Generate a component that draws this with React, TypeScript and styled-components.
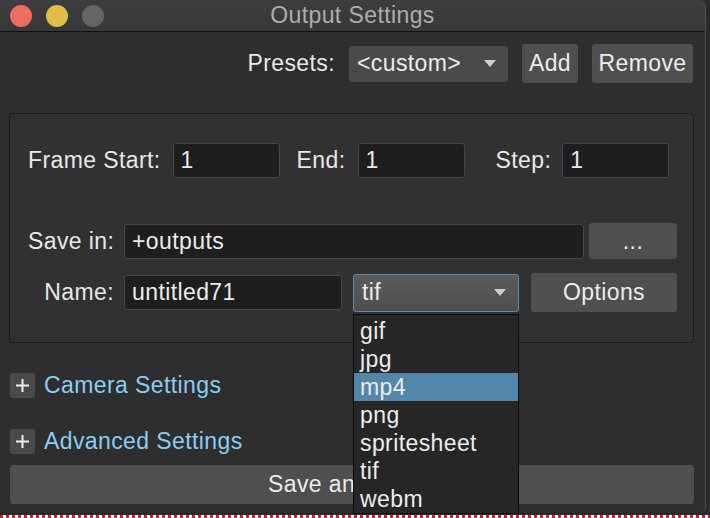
import React from "react";
import styled, { createGlobalStyle } from "styled-components";

const GlobalStyle = createGlobalStyle`
  html, body {
    margin: 0;
    padding: 0;
    background: #ffffff;
  }
  body {
    font-family: "Liberation Sans", Arial, sans-serif;
    color: #e6e6e6;
    letter-spacing: 0.4px;
  }
`;

const Page = styled.div`
  width: 710px;
  height: 518px;
  position: relative;
  overflow: hidden;
  background: #2a2a2a;
`;

const Window = styled.div`
  width: 706px;
  height: 513px;
  background: #2e2e2e;
  border-right: 1px solid #4e4e4e;
  border-radius: 0 6px 6px 0;
  display: flex;
  flex-direction: column;
  box-sizing: border-box;
`;

const TitleBar = styled.div`
  height: 32px;
  flex: none;
  display: flex;
  align-items: center;
  position: relative;
  background: linear-gradient(#3e3e3e, #373737);
  border-bottom: 1px solid #111;
  border-radius: 0 6px 0 0;
  box-sizing: border-box;
`;

const Lights = styled.div`
  display: flex;
  gap: 14px;
  padding-left: 10px;
`;

const Light = styled.span<{ color: string }>`
  width: 22px;
  height: 22px;
  border-radius: 50%;
  background: ${(p) => p.color};
`;

const Title = styled.div`
  position: absolute;
  left: 0;
  right: 0;
  text-align: center;
  font-size: 23px;
  color: #adadad;
  pointer-events: none;
`;

const PresetRow = styled.div`
  display: flex;
  justify-content: flex-end;
  align-items: center;
  gap: 14px;
  margin: 12px 12px 0 0;
  height: 39px;
`;

const Label = styled.span`
  font-size: 23px;
  color: #e8e8e8;
  white-space: nowrap;
`;

const Button = styled.button<{ w?: number; h?: number }>`
  font-family: inherit;
  font-size: 23px;
  letter-spacing: 0.4px;
  color: #ececec;
  background: #4f4f4f;
  border: none;
  border-radius: 3px;
  padding: 0;
  width: ${(p) => (p.w ? `${p.w}px` : "auto")};
  height: ${(p) => p.h || 39}px;
  display: flex;
  align-items: center;
  justify-content: center;
  box-sizing: border-box;
`;

const SelectBox = styled.div<{ w: number; focused?: boolean }>`
  width: ${(p) => p.w}px;
  height: ${(p) => (p.focused ? 38 : 36)}px;
  box-sizing: border-box;
  display: flex;
  align-items: center;
  justify-content: space-between;
  padding: 0 12px 0 8px;
  font-size: 23px;
  color: #ececec;
  border-radius: 3px;
  background: ${(p) =>
    p.focused ? "linear-gradient(#5c5c5c, #4e4e4e)" : "#4a4a4a"};
  border: ${(p) => (p.focused ? "1px solid #5a8fb5" : "none")};
`;

const Arrow = styled.span`
  width: 0;
  height: 0;
  border-left: 6px solid transparent;
  border-right: 6px solid transparent;
  border-top: 7px solid #cfcfcf;
`;

const Group = styled.div`
  margin: 30px 11px 0 9px;
  height: 230px;
  box-sizing: border-box;
  border: 1px solid #191919;
  border-radius: 4px;
  background: #313131;
  padding: 29px 0 0 18px;
  display: flex;
  flex-direction: column;
`;

const FrameRow = styled.div`
  display: flex;
  align-items: center;
  height: 35px;
`;

const Input = styled.div<{ w: number; gap?: number }>`
  width: ${(p) => p.w}px;
  height: 35px;
  flex: none;
  margin-left: ${(p) => p.gap || 0}px;
  box-sizing: border-box;
  background: #1e1e1e;
  border: 1px solid #474747;
  border-radius: 3px;
  padding-left: 7px;
  display: flex;
  align-items: center;
  font-size: 23px;
  color: #ececec;
`;

const RowLabel = styled(Label)<{ gap: number }>`
  margin-left: ${(p) => p.gap}px;
`;

const FileGrid = styled.div`
  margin-top: 45px;
  display: grid;
  grid-template-columns: 86px auto;
  column-gap: 10px;
  row-gap: 14px;
  align-items: center;
`;

const RightLabel = styled(Label)`
  text-align: right;
`;

const FieldLine = styled.div`
  display: flex;
  align-items: center;
`;

const BrowseButton = styled(Button)`
  margin-left: 5px;
`;

const OptionsButton = styled(Button)`
  margin-left: 12px;
`;

const DropWrap = styled.div`
  position: relative;
  margin-left: 11px;
`;

const Menu = styled.ul`
  position: absolute;
  left: 0;
  top: 40px;
  width: 166px;
  margin: 0;
  padding: 2px 0 0;
  list-style: none;
  background: #262626;
  border: 1px solid #0c0c0c;
  box-sizing: border-box;
  z-index: 5;
`;

const MenuItem = styled.li<{ active?: boolean }>`
  height: 28px;
  line-height: 28px;
  padding-left: 6px;
  font-size: 23px;
  color: #ececec;
  background: ${(p) => (p.active ? "#5286aa" : "transparent")};
`;

const Section = styled.div<{ top: number }>`
  display: flex;
  align-items: center;
  gap: 9px;
  margin: ${(p) => p.top}px 0 0 10px;
  height: 25px;
`;

const PlusBox = styled.span`
  width: 25px;
  height: 25px;
  border-radius: 2px;
  background: #4a4a4a;
  display: flex;
  align-items: center;
  justify-content: center;
`;

const SectionTitle = styled.span`
  font-size: 23px;
  color: #8ccdf3;
`;

const SaveButton = styled(Button)`
  margin: 11px 11px 0 10px;
  width: auto;
`;

const PageEdge = styled.div`
  position: absolute;
  left: 0;
  right: 0;
  bottom: 0;
  height: 3px;
  background: repeating-linear-gradient(
    90deg,
    #c0262b 0 3px,
    #ffffff 3px 6px
  );
`;

const formats = ["gif", "jpg", "mp4", "png", "spritesheet", "tif", "webm"];

const Plus = () => (
  <PlusBox>
    <svg width="15" height="15" viewBox="0 0 15 15">
      <path d="M7.5 1v13M1 7.5h13" stroke="#f0f0f0" strokeWidth="2" />
    </svg>
  </PlusBox>
);

export default function App() {
  return (
    <>
      <GlobalStyle />
      <Page>
        <Window>
          <TitleBar>
            <Lights>
              <Light color="#ee6b60" />
              <Light color="#e1bd4a" />
              <Light color="#656565" />
            </Lights>
            <Title>Output Settings</Title>
          </TitleBar>

          <PresetRow>
            <Label>Presets:</Label>
            <SelectBox w={159}>
              &lt;custom&gt;
              <Arrow />
            </SelectBox>
            <Button w={56}>Add</Button>
            <Button w={101}>Remove</Button>
          </PresetRow>

          <Group>
            <FrameRow>
              <Label>Frame Start:</Label>
              <Input w={107} gap={12}>1</Input>
              <RowLabel gap={17}>End:</RowLabel>
              <Input w={107} gap={12}>1</Input>
              <RowLabel gap={31}>Step:</RowLabel>
              <Input w={107} gap={11}>1</Input>
            </FrameRow>

            <FileGrid>
              <RightLabel>Save in:</RightLabel>
              <FieldLine>
                <Input w={460}>+outputs</Input>
                <BrowseButton w={88} h={36}>...</BrowseButton>
              </FieldLine>

              <RightLabel>Name:</RightLabel>
              <FieldLine>
                <Input w={218}>untitled71</Input>
                <DropWrap>
                  <SelectBox w={166} focused>
                    tif
                    <Arrow />
                  </SelectBox>
                  <Menu>
                    {formats.map((f) => (
                      <MenuItem key={f} active={f === "mp4"}>
                        {f}
                      </MenuItem>
                    ))}
                  </Menu>
                </DropWrap>
                <OptionsButton w={146}>Options</OptionsButton>
              </FieldLine>
            </FileGrid>
          </Group>

          <Section top={30}>
            <Plus />
            <SectionTitle>Camera Settings</SectionTitle>
          </Section>

          <Section top={31}>
            <Plus />
            <SectionTitle>Advanced Settings</SectionTitle>
          </Section>

          <SaveButton>Save and Close</SaveButton>
        </Window>
        <PageEdge />
      </Page>
    </>
  );
}
